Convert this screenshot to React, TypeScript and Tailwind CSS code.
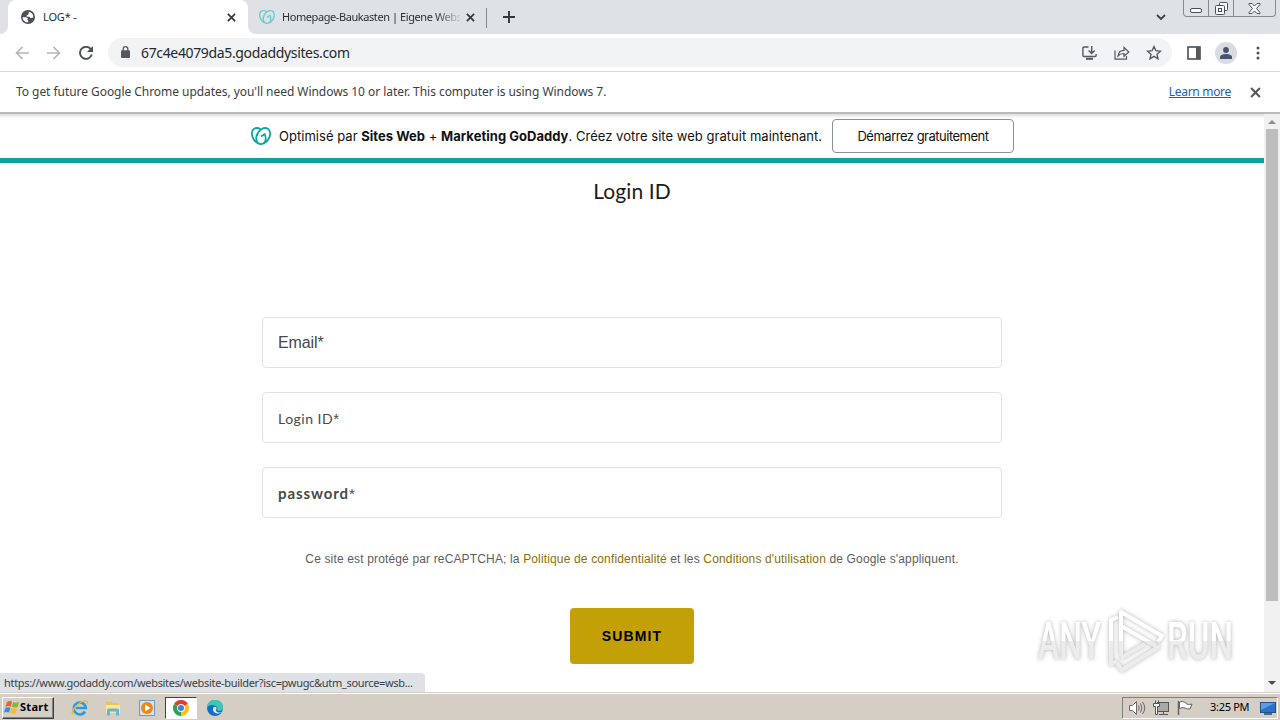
import type { ReactNode } from "react";
import { SiGodaddy } from "react-icons/si";

const UI_FONT = "font-['Noto_Sans','DejaVu_Sans',sans-serif]";

function CloseIcon({ size = 9, className = "" }: { size?: number; className?: string }) {
  return (
    <svg width={size} height={size} viewBox="0 0 10 10" className={className}>
      <path d="M1 1l8 8M9 1l-8 8" stroke="currentColor" strokeWidth="1.9" fill="none" />
    </svg>
  );
}

function GlobeIcon() {
  return (
    <svg width="14" height="14" viewBox="0 0 14 14">
      <circle cx="7" cy="7" r="7" fill="#4d5156" />
      <path d="M1.6 7.2h3.6l1.6 1.4-.5 1.4 1 .8v1.5C4 12.6 1.5 10 1.6 7.2z" fill="#fff" />
      <path d="M7.6 1.7c2.6.2 4.6 2.3 4.7 4.9l-.8 1.5H9.6L8.5 6.7H5.7V5.2l1.6-.5.3-1.3z" fill="#fff" />
    </svg>
  );
}

function TabStrip() {
  return (
    <div className="flex h-[34px] bg-[#dee1e6] text-[#2b2e33]">
      <div className="flex w-2 items-end bg-white">
        <div className="h-full w-full rounded-br-lg bg-[#dee1e6]" />
      </div>
      <div className="flex w-[240px] items-center rounded-t-lg bg-white pl-[13px] pr-[12px]">
        <GlobeIcon />
        <span className="ml-[8px] flex-1 text-[11px] tracking-[-0.15px]">LOG* -</span>
        <CloseIcon className="text-[#33363a]" />
      </div>
      <div className="w-2 bg-white">
        <div className="h-full w-full rounded-bl-lg bg-[#dee1e6]" />
      </div>
      <div className="flex w-[231px] items-center border-r border-[#84878c] pl-[3px] pr-[11px] [border-image:linear-gradient(to_bottom,transparent_24%,#84878c_24%,#84878c_80%,transparent_80%)_1]">
        <SiGodaddy size={16} className="shrink-0 text-[#6ccfca]" />
        <span className="ml-[7px] w-[178px] whitespace-nowrap text-[11px] tracking-[-0.42px] [mask-image:linear-gradient(to_right,black_86%,transparent_102%)]">
          Homepage-Baukasten | Eigene Webs
        </span>
        <CloseIcon className="ml-auto shrink-0 text-[#33363a]" />
      </div>
      <svg width="12" height="12" viewBox="0 0 12 12" className="mt-[11px] ml-[16px]">
        <path d="M6 0v12M0 6h12" stroke="#33363a" strokeWidth="1.9" />
      </svg>
      <svg width="10" height="7" viewBox="0 0 10 7" className="mt-[14px] ml-auto" fill="none">
        <path d="M1 1l4 4 4-4" stroke="#3c4043" strokeWidth="1.8" />
      </svg>
      <WindowButtons />
    </div>
  );
}

function WindowButtons() {
  return (
    <div className="mr-[4px] ml-[17px] flex h-[17px] w-[93px] rounded-b-[4px] border border-t-0 border-[#868b93] text-[#4b5058]">
      <div className="flex w-[25px] items-end justify-center border-r border-[#868b93] pb-[3px]">
        <div className="h-[5px] w-[12px] rounded-[2px] border border-current bg-[#f7f8fa]" />
      </div>
      <div className="flex w-[25px] items-center justify-center border-r border-[#868b93]">
        <svg width="13" height="13" viewBox="0 0 13 13" fill="#f7f8fa" stroke="currentColor">
          <rect x="4.5" y=".5" width="8" height="8" rx="1" />
          <rect x=".5" y="3.5" width="9" height="9" rx="1" />
          <rect x="3.5" y="6.5" width="3" height="3" />
        </svg>
      </div>
      <div className="flex flex-1 items-center justify-center">
        <svg width="13" height="11" viewBox="0 0 13 11">
          <path d="M1 .5h3l2.5 2.5L9 .5h3v1L8.5 5.5 12 9.5v1H9L6.5 8 4 10.500H1v-1l3.500-4L1 1.500z" fill="#f7f8fa" stroke="currentColor" />
        </svg>
      </div>
    </div>
  );
}

function Toolbar() {
  return (
    <div className="flex h-[38px] items-center border-b border-[#d6d9dc] bg-white text-[#55585d]">
      <svg width="14" height="14" viewBox="0 0 14 14" className="ml-[15px]" fill="none" stroke="#b4b6b9" strokeWidth="1.7">
        <path d="M14 7H1.5M7.500 1L1.500 7l6 6" />
      </svg>
      <svg width="14" height="14" viewBox="0 0 14 14" className="ml-[18px]" fill="none" stroke="#b4b6b9" strokeWidth="1.7">
        <path d="M0 7h12.500M6.500 1l6 6-6 6" />
      </svg>
      <svg width="14" height="14" viewBox="0 0 14 14" className="ml-[18px]" fill="none" stroke="#4d5156" strokeWidth="1.9">
        <path d="M11.800 3.200A6 6 0 1 0 12.800 8.500" />
        <path d="M14 0v6H8z" fill="#4d5156" stroke="none" />
      </svg>
      <div className="ml-[15px] flex h-[29px] w-[1064px] items-center rounded-full bg-[#f1f3f4]">
        <svg width="9" height="12" viewBox="0 0 9 12" className="mb-[2px] ml-[13px]">
          <rect y="4.300" width="9" height="7.700" rx="1" fill="#55585d" />
          <path d="M2.200 5V3a2.300 2.300 0 0 1 4.600 0v2" fill="none" stroke="#55585d" strokeWidth="1.3" />
        </svg>
        <span className="ml-[11px] flex-1 text-[14px] tracking-[-0.35px] text-[#25282c]">67c4e4079da5.godaddysites.com</span>
        {/* install */}
        <svg width="15" height="14" viewBox="0 0 15 14" fill="none" stroke="currentColor" strokeWidth="1.4">
          <path d="M6.500 1H2Q.9 1 .9 2v7.500q0 1 1 1h11.200q1 0 1-1V8M9.700 0v7M6.700 4.500l3 3 3-3" />
          <path d="M4 12.800h7" strokeWidth="2" />
        </svg>
        {/* share */}
        <svg width="16" height="14" viewBox="0 0 16 14" className="ml-[17px]" fill="none" stroke="currentColor" strokeWidth="1.2">
          <path d="M1 4.500v8.600h11.500V10" />
          <path d="M4 10c.5-3.800 2.800-5.500 6-5.600V1.500L14.800 6 10 10.300V7.500C7.500 7.400 5.600 8.200 4 10z" />
        </svg>
        <svg width="16" height="15" viewBox="0 0 16 15" className="mr-[10px] ml-[16px]" fill="none" stroke="currentColor" strokeWidth="1.4">
          <path d="M8 1.500l1.900 4.200 4.600.5L11 9.300l1 4.500-4-2.400-4 2.400 1-4.500L1.500 6.200l4.600-.5z" />
        </svg>
      </div>
      <svg width="14" height="14" viewBox="0 0 14 14" className="ml-[15px]">
        <rect x="1" y="1" width="12" height="12" fill="none" stroke="currentColor" strokeWidth="1.7" />
        <path d="M9 1h4v12H9z" fill="currentColor" />
      </svg>
      <div className="ml-[14px] flex size-[22px] items-center justify-center rounded-full bg-[#dadce2]">
        <svg width="12" height="12" viewBox="0 0 12 12" fill="#47546d">
          <circle cx="6" cy="3" r="2.9" />
          <path d="M0 12v-2c0-2 3-3 6-3s6 1 6 3v2z" />
        </svg>
      </div>
      <svg width="4" height="14" viewBox="0 0 4 14" className="ml-[19px]" fill="#4d5156">
        <circle cx="2" cy="2" r="1.5" />
        <circle cx="2" cy="7" r="1.5" />
        <circle cx="2" cy="12" r="1.5" />
      </svg>
    </div>
  );
}

function InfoBar() {
  return (
    <div className="flex h-[40px] items-center bg-white pr-[19px] pl-[16px] text-[12px] text-[#3b3e42]">
      <span className="tracking-[-0.05px]">
        To get future Google Chrome updates, you'll need Windows 10 or later. This computer is using Windows 7.
      </span>
      <a className="ml-auto tracking-[-0.3px] text-[#1c62bd] underline">Learn more</a>
      <CloseIcon size={11} className="ml-[19px] text-[#55585d]" />
    </div>
  );
}

function PromoBanner() {
  return (
    <div className="flex h-[45px] items-center border-b-[5px] border-[#09a59d] bg-white pb-[5px] pl-[251px] font-['Inter','Roboto',sans-serif] text-[13px] text-[#111]">
      <SiGodaddy size={20} className="text-[#0aa69f]" />
      <span className="ml-[8px] w-[553px] pt-[2px] whitespace-nowrap tracking-[0.03px]">
        Optimisé par <b className="font-bold">Sites Web</b> + <b className="font-bold">Marketing GoDaddy</b>. Créez votre site web gratuit
        maintenant.
      </span>
      <button className="h-[34px] w-[182px] rounded-[4px] border border-[#8b9099] pt-[2px] tracking-[-0.5px]">
        Démarrez gratuitement
      </button>
    </div>
  );
}

function Field({ children }: { children: ReactNode }) {
  return (
    <div className="flex h-[51px] items-center rounded-[4px] border border-[#e2e2e2] bg-white px-[15px] text-[16px] text-[#484848]">
      {children}
    </div>
  );
}

function Required() {
  return <span className="font-['Liberation_Sans',Arial,sans-serif] text-[15px] font-normal tracking-normal">*</span>;
}

function LoginPage() {
  return (
    <div className="flex flex-col items-center">
      <h1 className="mt-[12px] h-[32px] font-['Lato',sans-serif] text-[21px] leading-[32px] tracking-[0.1px] text-[#1b1b1b]">Login ID</h1>
      <form className="mt-[110px] flex w-[740px] flex-col gap-6">
        <Field>
          <span className="pt-px font-['Liberation_Sans',Arial,sans-serif] tracking-[-0.1px]">Email*</span>
        </Field>
        <Field>
          <span className="pt-[4px] font-['Lato',sans-serif] text-[14px] tracking-[0.5px]">
            Login ID
            <Required />
          </span>
        </Field>
        <Field>
          <span className="pt-[2px] font-['Lato',sans-serif] text-[15px] font-bold tracking-[0.9px]">
            password
            <Required />
          </span>
        </Field>
      </form>
      <p className="mt-[32px] font-['Liberation_Sans',Arial,sans-serif] text-[12px] leading-[18px] tracking-[0.15px] whitespace-nowrap text-[#5e5e5e]">
        Ce site est protégé par reCAPTCHA; la <a className="text-[#8a6f08]">Politique de confidentialité</a> et les{" "}
        <a className="text-[#8a6f08]">Conditions d'utilisation</a> de Google s'appliquent.
      </p>
      <button className="mt-[40px] h-[56px] w-[124px] rounded-[4px] bg-[#c4a007] font-['Liberation_Sans',Arial,sans-serif] text-[14px] font-bold tracking-[1.1px] text-black">
        SUBMIT
      </button>
    </div>
  );
}

function ScrollBar() {
  return (
    <div className="flex w-[16px] flex-col items-center bg-[#f1f1f1]">
      <div className="flex h-[15px] items-center">
        <div className="border-x-[4px] border-b-[4px] border-x-transparent border-b-[#8c8c8c]" />
      </div>
      <div className="h-[472px] w-[12px] bg-[#bdbdbd]" />
      <div className="mt-auto flex h-[18px] items-center">
        <div className="border-x-[4px] border-t-[4px] border-x-transparent border-t-[#484848]" />
      </div>
    </div>
  );
}

function Watermark() {
  return (
    <svg
      width="204"
      height="76"
      viewBox="0 0 204 76"
      className="pointer-events-none absolute top-[602px] left-[1033px] overflow-visible drop-shadow-[0_0_2px_rgba(0,0,0,0.3)]"
    >
      <defs>
        <linearGradient id="wm" gradientUnits="userSpaceOnUse" x1="0" y1="0" x2="0" y2="76">
          <stop offset="51%" stopColor="#ffffff" />
          <stop offset="51%" stopColor="#ececec" />
        </linearGradient>
      </defs>
      <g fill="url(#wm)" fontFamily="Roboto, sans-serif" fontSize="51" fontWeight="500">
        <text x="5" y="57" textLength="63" lengthAdjust="spacingAndGlyphs">ANY</text>
        <text x="134" y="57" textLength="66" lengthAdjust="spacingAndGlyphs">RUN</text>
      </g>
      <g fill="none" stroke="url(#wm)" strokeWidth="4" strokeLinejoin="round">
        <path d="M85 15L78 18V62L84 59" />
        <path d="M88 54V10L129 34L125 40" />
        <path d="M88 24L123 44" />
        <path d="M84 61L89 68L127 44" />
        <path d="M88 56L112 42" />
      </g>
    </svg>
  );
}

function StartFlag() {
  return (
    <svg width="16" height="15" viewBox="0 0 16 15">
      <path d="M3 2Q5.500.2 8 1.700L6.800 6.500Q4 5.500 1.500 7z" fill="#e9632b" />
      <path d="M9 2.100Q12 3.500 15 2L13.700 7Q10.500 8.200 7.800 6.800z" fill="#82b93c" />
      <path d="M1.300 8Q4 6.600 6.500 7.700L5.200 12.500Q2.500 11.200 0 12.800z" fill="#3b8ede" />
      <path d="M7.500 8Q10.500 9.500 13.300 8.200L12 13Q9 14.500 6.200 12.900z" fill="#f7bd2a" />
    </svg>
  );
}

function TaskIcons() {
  return (
    <div className="ml-[17px] flex h-[22px] items-center">
      {/* internet explorer */}
      <svg width="18" height="18" viewBox="0 0 18 18" fill="none">
        <path d="M14 12.500A6 6 0 1 1 14.800 9H5" stroke="#2b9be0" strokeWidth="2.6" />
        <path d="M2 15.500C-.5 13 5 6 10 3.200c4-2.300 7-1.900 6.200 1.200" stroke="#e7b93c" strokeWidth="1.3" />
      </svg>
      {/* explorer */}
      <svg width="18" height="18" viewBox="0 0 18 18" className="ml-[15px]">
        <path d="M2 4V2.500h5L8.500 4H15v10H2z" fill="#e5c55e" />
        <path d="M2 6h14v8H2z" fill="#f8e79d" />
        <path d="M3 16.500v-5q0-2 2-2h8q2 0 2 2v5h-3v-4H6v4z" fill="#63b5e5" />
      </svg>
      {/* media player */}
      <svg width="16" height="16" viewBox="0 0 16 16" className="ml-[17px]">
        <rect x=".5" y=".5" width="15" height="15" fill="#cfe4f5" stroke="#6a9cc6" />
        <circle cx="8" cy="8" r="6" fill="#ee8712" />
        <path d="M6 4.500v7L11.500 8z" fill="#fff" />
      </svg>
      <div className="ml-[10px] flex h-[22px] w-[32px] items-center justify-center border border-t-[#404040] border-r-white border-b-white border-l-[#404040] bg-white">
        <svg width="16" height="16" viewBox="0 0 16 16">
          <path d="M8 8L1.070 4A8 8 0 0 1 14.930 4z" fill="#e33b2e" />
          <path d="M8 8V16A8 8 0 0 1 1.070 4z" fill="#2fa24f" />
          <path d="M8 8L14.930 4A8 8 0 0 1 8 16z" fill="#fbc116" />
          <circle cx="8" cy="8" r="3.9" fill="#fff" />
          <circle cx="8" cy="8" r="3" fill="#3f7fe8" />
        </svg>
      </div>
      {/* edge */}
      <svg width="16" height="16" viewBox="0 0 16 16" className="ml-[10px]">
        <circle cx="8" cy="8" r="8" fill="#1270c4" />
        <path d="M0 7.500A8 8 0 0 1 16 8c0 2.500-2.500 3.300-4.500 2.800-2-.5-1-1.300-1.200-2.800C9.500 4.500 3 4 0 7.500z" fill="#3ec7b5" />
        <path d="M6.500 7.200c-1.500 3 .5 6 4 6.300 2 .1 3.700-.8 4.500-1.500-2 1-5.500.8-6-1.500-.3-1 .7-1.500.5-2.500-.3-1-2-1.500-3-.8z" fill="#d9ebf5" />
      </svg>
    </div>
  );
}

function Tray() {
  return (
    <div className="mr-[2px] ml-auto flex h-[22px] w-[156px] items-center border border-t-[#808080] border-r-white border-b-white border-l-[#808080] pl-[6px]">
      <svg width="17" height="16" viewBox="0 0 17 16" fill="none" stroke="#6b6b6b">
        <path d="M.5 5.500h3l4-4v13l-4-4h-3z" fill="#fff" />
        <path d="M9.500 5.500q1.500 2.500 0 5M11.500 3.500q3 4.500 0 9M13.500 2q4.500 6 0 12" />
      </svg>
      <svg width="17" height="16" viewBox="0 0 17 16" className="ml-[7px]" stroke="#555">
        <rect x="4.5" y="2.5" width="11" height="9" fill="#a9a9a9" />
        <path d="M10.500 11.500v2.500M6 14.500h9" />
        <path d="M.5 3.500h6v3h-2v8H2.500v-8h-2z" fill="#fff" />
        <path d="M2.500.5v3M5.500.5v3" />
      </svg>
      <svg width="17" height="16" viewBox="0 0 17 16" className="ml-[7px]" fill="#fff" stroke="#666">
        <path d="M1.500 1v14" strokeWidth="1.5" />
        <path d="M2.500 2q3-1.500 6 .5l1 1.500q3 1 5.500 0l-2 5q-3 .5-5-1-3-1-5.500.5z" />
      </svg>
      <span className="ml-[16px] text-[11px] tracking-[-0.3px] whitespace-nowrap text-black">3:25 PM</span>
      <svg width="16" height="14" viewBox="0 0 16 14" className="mr-[1px] ml-auto shrink-0">
        <rect x=".5" y="1.5" width="15" height="10" fill="#2e71cb" stroke="#23528f" />
        <path d="M1 2h14L1 9z" fill="#5e9be5" />
        <path d="M4 13h8" stroke="#26446e" strokeWidth="1.5" />
      </svg>
    </div>
  );
}

function TaskBar() {
  return (
    <div className="flex h-[28px] items-center border-t border-[#d4d0c8] bg-[#d4cec5] pt-[2px] shadow-[inset_0_1px_0_#fff]">
      <div className="ml-[2px] flex h-[22px] w-[52px] items-center border border-t-white border-r-[#404040] border-b-[#404040] border-l-white pl-[1px] shadow-[inset_-1px_-1px_0_#808080]">
        <StartFlag />
        <span className="text-[11px] font-bold tracking-[0.3px] text-black">Start</span>
      </div>
      <TaskIcons />
      <Tray />
    </div>
  );
}

export default function App() {
  return (
    <div className={`relative flex h-[720px] w-[1280px] flex-col overflow-hidden bg-white ${UI_FONT}`}>
      <TabStrip />
      <Toolbar />
      <InfoBar />
      <div className="flex h-[580px] border-t-2 border-[#b9bbba]">
        <main className="w-[1264px] overflow-hidden bg-white">
          <div className="h-[4px] bg-linear-to-b from-[#dcdcdc] to-white" />
          <PromoBanner />
          <LoginPage />
        </main>
        <ScrollBar />
      </div>
      <TaskBar />

      {/* link status bubble */}
      <div className="absolute top-[673px] left-0 flex h-[19px] w-[425px] items-center rounded-tr-[4px] bg-[#dee1e6] pt-[1px] pl-[4px] text-[11px] tracking-[-0.32px] whitespace-nowrap text-[#3b3e42]">
        https://www.godaddy.com/websites/website-builder?isc=pwugc&utm_source=wsb...
      </div>
      <Watermark />
    </div>
  );
}
